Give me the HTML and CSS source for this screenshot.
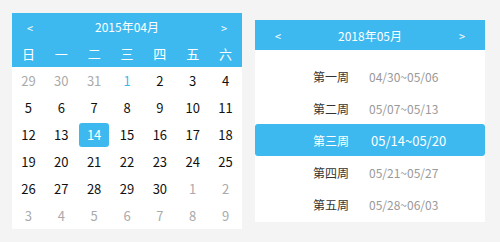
FILE: index.html
```html
<!DOCTYPE html>
<html lang="zh">
<head>
    <meta charset="UTF-8">
    <title>日历</title>
    <link rel="stylesheet" href="styles.css">
</head>
<body>
<div class="wrap">
    <div class="calendar">
        <div class="cal-head">
            <div class="cal-title">
                <span class="arrow">&lt;</span>
                <span>2015年04月</span>
                <span class="arrow">&gt;</span>
            </div>
            <div class="cal-week">
                <span>日</span><span>一</span><span>二</span><span>三</span><span>四</span><span>五</span><span>六</span>
            </div>
        </div>
        <div class="cal-days">
            <span class="other">29</span><span class="other">30</span><span class="other">31</span><span class="first">1</span><span>2</span><span>3</span><span>4</span>
            <span>5</span><span>6</span><span>7</span><span>8</span><span>9</span><span>10</span><span>11</span>
            <span>12</span><span>13</span><span class="today"><b>14</b></span><span>15</span><span>16</span><span>17</span><span>18</span>
            <span>19</span><span>20</span><span>21</span><span>22</span><span>23</span><span>24</span><span>25</span>
            <span>26</span><span>27</span><span>28</span><span>29</span><span>30</span><span class="other">1</span><span class="other">2</span>
            <span class="other">3</span><span class="other">4</span><span class="other">5</span><span class="other">6</span><span class="other">7</span><span class="other">8</span><span class="other">9</span>
        </div>
    </div>

    <div class="weeks">
        <div class="weeks-head">
            <span class="arrow">&lt;</span>
            <span>2018年05月</span>
            <span class="arrow">&gt;</span>
        </div>
        <div class="weeks-list">
            <div class="week-row"><span class="label">第一周</span><span class="range">04/30~05/06</span></div>
            <div class="week-row"><span class="label">第二周</span><span class="range">05/07~05/13</span></div>
            <div class="week-row active"><span class="label">第三周</span><span class="range">05/14~05/20</span></div>
            <div class="week-row"><span class="label">第四周</span><span class="range">05/21~05/27</span></div>
            <div class="week-row"><span class="label">第五周</span><span class="range">05/28~06/03</span></div>
        </div>
    </div>
</div>
</body>
</html>
```

FILE: styles.css
```css
body {
    margin: 0;
    padding: 0;
    background-color: #f4f4f4;
    font-family: "Noto Sans CJK SC", "Noto Sans", sans-serif;
}
.wrap {
    display: flex;
    align-items: flex-start;
    gap: 13px;
    padding: 13px 0 0 12px;
}
.calendar {
    width: 230px;
    background-color: #fff;
}
.cal-head {
    background-color: #3db9f0;
    color: #fff;
}
.cal-title {
    height: 27px;
    display: flex;
    align-items: center;
    justify-content: space-between;
    padding: 0 15px;
    font-size: 12px;
}
.arrow {
    font-size: 11px;
    padding-top: 2px;
}
.cal-week,
.cal-days {
    display: grid;
    grid-template-columns: repeat(7, 1fr);
}
.cal-week span {
    height: 27px;
    line-height: 27px;
    text-align: center;
    font-size: 13px;
}
.cal-days span {
    height: 27px;
    display: flex;
    align-items: center;
    justify-content: center;
    font-size: 13px;
    color: #111;
}
.cal-days .other {
    color: #aaa;
}
.cal-days .first {
    color: #3db9f0;
}
.cal-days .today b {
    width: 30px;
    height: 24px;
    line-height: 24px;
    text-align: center;
    font-weight: normal;
    background-color: #3db9f0;
    color: #fff;
    border-radius: 3px;
}
.weeks {
    width: 230px;
    margin-top: 7px;
    background-color: #fff;
}
.weeks-head {
    height: 30px;
    display: flex;
    align-items: center;
    justify-content: space-between;
    padding: 0 20px;
    background-color: #3db9f0;
    color: #fff;
    font-size: 12px;
}
.weeks-list {
    padding: 10px 0 2px;
}
.week-row {
    height: 32px;
    display: flex;
    align-items: center;
    padding-left: 58px;
    font-size: 12px;
    border-radius: 3px;
}
.week-row .label {
    width: 56px;
    color: #333;
}
.week-row .range {
    color: #999;
}
.week-row.active {
    background-color: #3db9f0;
}
.week-row.active .label,
.week-row.active .range {
    color: #fff;
}
.week-row.active .range {
    font-size: 13px;
    margin-left: 2px;
}
```
